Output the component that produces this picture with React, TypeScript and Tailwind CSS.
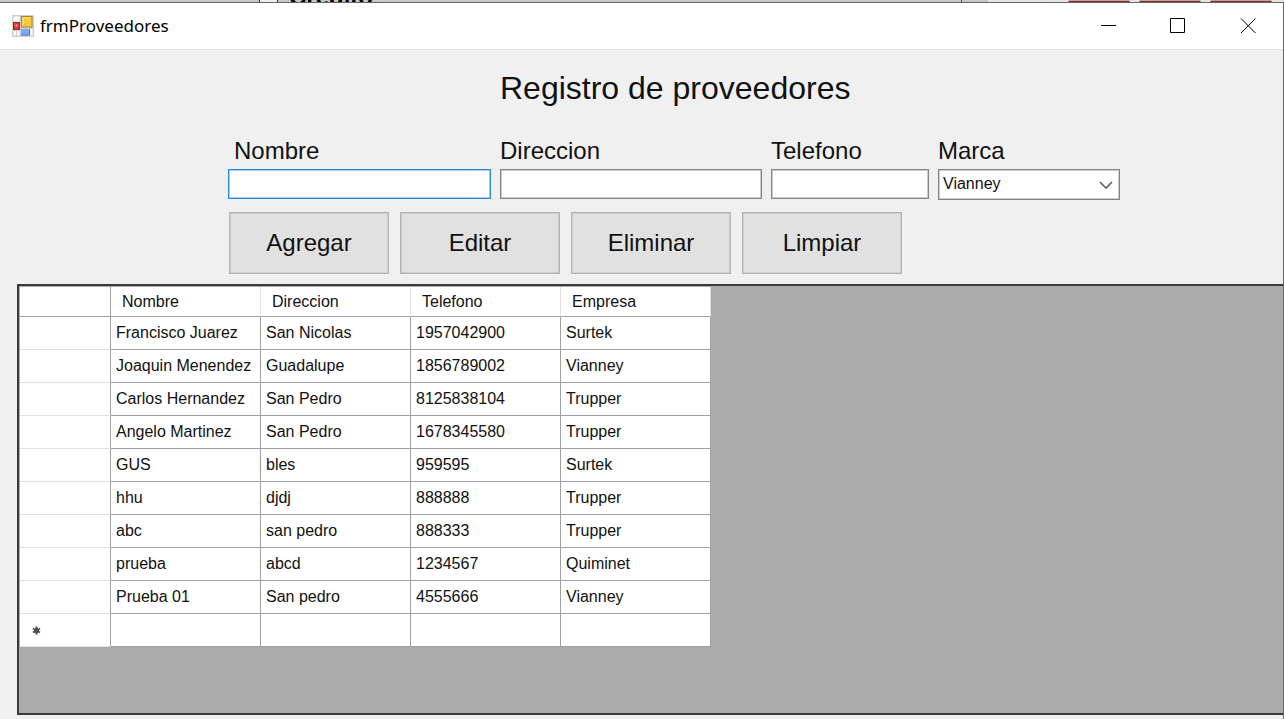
import type { ReactNode } from "react";

const suppliers = [
  ["Francisco Juarez", "San Nicolas", "1957042900", "Surtek"],
  ["Joaquin Menendez", "Guadalupe", "1856789002", "Vianney"],
  ["Carlos Hernandez", "San Pedro", "8125838104", "Trupper"],
  ["Angelo Martinez", "San Pedro", "1678345580", "Trupper"],
  ["GUS", "bles", "959595", "Surtek"],
  ["hhu", "djdj", "888888", "Trupper"],
  ["abc", "san pedro", "888333", "Trupper"],
  ["prueba", "abcd", "1234567", "Quiminet"],
  ["Prueba 01", "San pedro", "4555666", "Vianney"],
];

const columns = ["Nombre", "Direccion", "Telefono", "Empresa"];
const actions = ["Agregar", "Editar", "Eliminar", "Limpiar"];

function BackgroundWindow() {
  return (
    <div className="flex h-[2px] justify-between overflow-hidden bg-[#c8c8c8]" aria-hidden="true">
      <div className="flex">
        <div className="w-[260px] border-r border-[#333]" />
        <div className="w-[18px] border-r border-[#333] bg-[#eee]" />
        <div className="flex h-[2px] items-end overflow-hidden pl-[11px] font-['Liberation_Sans',sans-serif] text-2xl leading-[10px] font-bold text-black">
          Credito
        </div>
      </div>
      <div className="flex w-[323px] border-l border-[#555]">
        <div className="w-[26px]" />
        <div className="flex flex-1 gap-[9px] bg-[#e4e4e4] pr-[12px] pl-[80px]">
          <div className="flex-1 rounded-t-sm border-t border-[#c9a09c] bg-[#7d322c]" />
          <div className="flex-1 rounded-t-sm border-t border-[#c9a09c] bg-[#7d322c]" />
          <div className="flex-1 rounded-t-sm border-t border-[#c9a09c] bg-[#7d322c]" />
        </div>
      </div>
    </div>
  );
}

function AppIcon() {
  return (
    <svg width="22" height="22" viewBox="0 0 22 22" aria-hidden="true">
      <rect width="22" height="22" fill="#cfcfcf" />
      <rect x="1.500" y="1.500" width="6" height="5" fill="#fdfdfd" />
      <rect x="1.500" y="16" width="2.500" height="4.500" fill="#fdfdfd" />
      <rect x="5" y="16" width="2.500" height="4.500" fill="#fdfdfd" />
      <rect x="18.500" y="14" width="2" height="6.500" fill="#fdfdfd" />
      <rect x="9.500" y="1.500" width="10.500" height="10.500" fill="#f6c83c" stroke="#ad8416" />
      <path d="M11 10.500V3H18.500" stroke="#ffe69a" fill="none" />
      <rect x="1.500" y="7.500" width="6" height="7" fill="#d04036" stroke="#a5281f" />
      <rect x="3.500" y="9.500" width="2" height="2" fill="#eea39c" />
      <rect x="9" y="14" width="8.500" height="6.500" fill="#7da8f0" />
      <path d="M9 20H17.500V14.500" stroke="#4f7dd0" fill="none" />
    </svg>
  );
}

function CaptionButton({ label, children }: { label: string; children: ReactNode }) {
  return (
    <button type="button" aria-label={label} className="flex h-full w-[70px] items-center justify-center">
      <svg width="16" height="16" viewBox="0 0 16 16" fill="none" stroke="#000" aria-hidden="true">
        {children}
      </svg>
    </button>
  );
}

function TitleBar() {
  return (
    <header className="flex h-[46px] items-center justify-between bg-white">
      <div className="flex items-center gap-[6px] pl-3">
        <AppIcon />
        <span className="font-['Noto_Sans','Open_Sans',sans-serif] text-[17px] leading-6 text-black">frmProveedores</span>
      </div>
      <div className="flex h-full">
        <CaptionButton label="Minimizar">
          <path d="M1 7.500H16" />
        </CaptionButton>
        <CaptionButton label="Maximizar">
          <path d="M.5 .5H14.500V14.500H.5Z" />
        </CaptionButton>
        <CaptionButton label="Cerrar">
          <path d="M1 .5L15.500 15M15.500 .5L1 15" />
        </CaptionButton>
      </div>
    </header>
  );
}

function Field({ id, label, className, inset, children }: { id: string; label: string; className: string; inset?: boolean; children: ReactNode }) {
  return (
    <div className={`flex flex-col ${className}`}>
      <label htmlFor={id} className={`text-2xl leading-9 ${inset ? "pl-[6px]" : ""}`}>
        {label}
      </label>
      {children}
    </div>
  );
}

function SupplierForm() {
  return (
    <form className="pl-[228px]" onSubmit={(e) => e.preventDefault()}>
      <h1 className="pl-[272px] text-[32px] leading-10">Registro de proveedores</h1>
      <div className="mt-[25px] flex items-start gap-[9px]">
        <Field id="nombre" label="Nombre" className="w-[263px]" inset>
          <input id="nombre" type="text" className="h-[30px] border border-[#2a87d8] bg-white px-1 text-base shadow-[inset_0_0_0_1px_#a3cdf1] outline-none" />
        </Field>
        <Field id="direccion" label="Direccion" className="w-[262px]">
          <input id="direccion" type="text" className="h-[30px] border border-[#848484] bg-white px-1 text-base shadow-[inset_0_0_0_1px_#cccccc] outline-none" />
        </Field>
        <Field id="telefono" label="Telefono" className="w-[158px]">
          <input id="telefono" type="text" className="h-[30px] border border-[#848484] bg-white px-1 text-base shadow-[inset_0_0_0_1px_#cccccc] outline-none" />
        </Field>
        <Field id="marca" label="Marca" className="w-[182px]">
          <div className="relative">
            <select id="marca" defaultValue="Vianney" className="block h-[31px] w-full appearance-none border border-[#848484] bg-white pb-[2px] pl-1 text-base leading-6 shadow-[inset_0_0_0_1px_#cccccc] outline-none">
              <option>Vianney</option>
              <option>Surtek</option>
              <option>Trupper</option>
              <option>Quiminet</option>
            </select>
            <svg className="pointer-events-none absolute top-3 right-[7px]" width="14" height="9" viewBox="0 0 14 9" fill="none" stroke="#606060" strokeWidth="1.600" aria-hidden="true">
              <path d="M1 1L7 7L13 1" />
            </svg>
          </div>
        </Field>
      </div>
      <div className="mt-3 flex gap-[11px] pl-[1px]">
        {actions.map((action) => (
          <button key={action} type="button" className="h-[62px] w-[160px] border border-[#b4b4b4] bg-[#e1e1e1] text-2xl shadow-[inset_0_0_0_1px_#cccccc]">
            {action}
          </button>
        ))}
      </div>
    </form>
  );
}

function SupplierGrid() {
  return (
    <div className="mb-1 ml-[17px] flex-1 border-y-2 border-l-2 border-[#3a3a3a] bg-[#ababab] pt-px pl-px">
      <table className="table-fixed border-separate border-spacing-0 text-base leading-6">
        <colgroup>
          <col className="w-[91px]" />
          <col className="w-[150px]" />
          <col className="w-[150px]" />
          <col className="w-[150px]" />
          <col className="w-[150px]" />
        </colgroup>
        <thead>
          <tr className="h-[30px] bg-white">
            <th className="border-r border-b border-[#a0a0a0] p-0" aria-label="Fila" />
            {columns.map((column) => (
              <th key={column} scope="col" className="border-r border-b border-r-[#e2e2e2] border-b-[#a0a0a0] p-0 pl-[11px] text-left font-normal">
                {column}
              </th>
            ))}
          </tr>
        </thead>
        <tbody>
          {suppliers.map((row) => (
            <tr key={row[0]} className="h-[33px] bg-white">
              <th scope="row" aria-label={row[0]} className="border-r border-b border-r-[#a0a0a0] border-b-[#e2e2e2] p-0" />
              {row.map((value, i) => (
                <td key={i} className="border-r border-b border-[#a0a0a0] p-0 pl-[5px] whitespace-nowrap">
                  {value}
                </td>
              ))}
            </tr>
          ))}
          <tr className="h-[33px] bg-white">
            <th scope="row" aria-label="Nueva fila" className="border-r border-b border-r-[#a0a0a0] border-b-[#e2e2e2] p-0 pl-3">
              <svg width="9" height="9" viewBox="0 0 9 9" stroke="#505050" strokeWidth="2" aria-hidden="true">
                <circle cx="4.500" cy="4.500" r="2.500" fill="#404040" stroke="none" />
                <path d="M4.500 .5V8.500M1 2.500L8 6.500M8 2.500L1 6.500" />
              </svg>
            </th>
            {columns.map((column) => (
              <td key={column} className="border-r border-b border-[#a0a0a0] p-0" />
            ))}
          </tr>
        </tbody>
      </table>
    </div>
  );
}

export default function App() {
  return (
    <div className="flex min-h-screen flex-col bg-[#f0f0f0] font-['Liberation_Sans',Arial,sans-serif] text-[#111]">
      <BackgroundWindow />
      <main className="flex flex-1 flex-col border-t border-r border-[#666]">
        <TitleBar />
        <div className="flex flex-1 flex-col border-t border-[#e6e6e6] pt-[18px]">
          <SupplierForm />
          <div className="mt-[10px] flex flex-1 flex-col">
            <SupplierGrid />
          </div>
        </div>
      </main>
    </div>
  );
}
